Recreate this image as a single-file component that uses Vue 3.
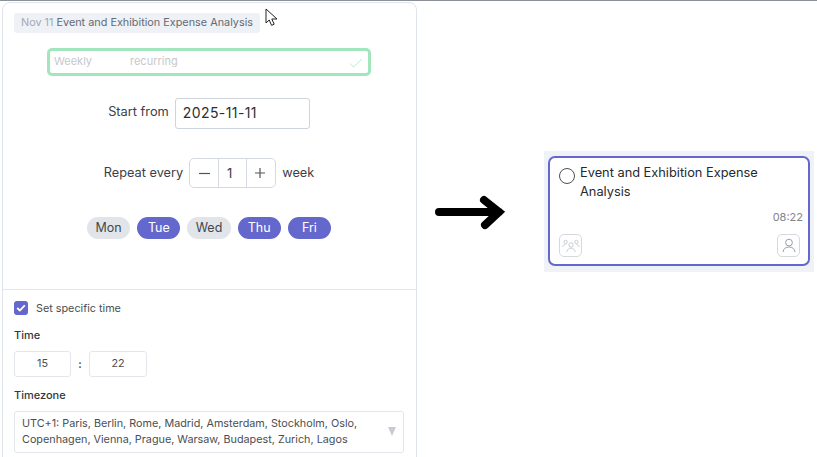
<script setup>
const days = [
  { name: 'Mon', on: false },
  { name: 'Tue', on: true },
  { name: 'Wed', on: false },
  { name: 'Thu', on: true },
  { name: 'Fri', on: true },
]
</script>

<template>
  <div class="page">
    <section class="panel">
      <div class="upper">
        <div class="tagline"><span class="tag"><span class="date">Nov 11</span> Event and Exhibition Expense Analysis</span></div>
        <div class="recur">
          <span class="weekly">Weekly</span>
          <span class="recurring">recurring</span>
          <svg class="ok" width="14" height="10" viewBox="0 0 14 10"><path d="M1 5.5 4.5 9 13 1" fill="none" stroke="#bdeccf" stroke-width="1"/></svg>
        </div>
        <div class="start">
          <span class="start-label">Start from</span>
          <div class="date-input">2025-11-11</div>
        </div>
        <div class="repeat">
          <span class="repeat-text">Repeat every</span>
          <div class="stepper">
            <span class="step">
              <svg width="11" height="11" viewBox="0 0 11 11"><path d="M0 5.5h11" stroke="#555" stroke-width="1.2"/></svg>
            </span>
            <span class="step mid">1</span>
            <span class="step plus">
              <svg width="10" height="10" viewBox="0 0 10 10"><path d="M0 5h10M5 0v10" stroke="#555" stroke-width="1.2"/></svg>
            </span>
          </div>
          <span class="repeat-text">week</span>
        </div>
        <div class="days">
          <span v-for="d in days" :key="d.name" class="day" :class="{ on: d.on }">{{ d.name }}</span>
        </div>
      </div>
      <div class="lower">
        <div class="check-row">
          <span class="check">
            <svg width="10" height="8" viewBox="0 0 10 8"><path d="M1.2 4 3.8 6.5 8.8 1.3" fill="none" stroke="#fff" stroke-width="1.8"/></svg>
          </span>
          <span>Set specific time</span>
        </div>
        <div class="label time-label">Time</div>
        <div class="time-row">
          <span class="time-box">15</span>
          <span class="colon">:</span>
          <span class="time-box wide">22</span>
        </div>
        <div class="label zone-label">Timezone</div>
        <div class="zone">
          <span>UTC+1: Paris, Berlin, Rome, Madrid, Amsterdam, Stockholm, Oslo, Copenhagen, Vienna, Prague, Warsaw, Budapest, Zurich, Lagos</span>
          <i class="caret"></i>
        </div>
      </div>
      <svg class="cursor" width="14" height="20" viewBox="0 0 14 20">
        <path d="M1 1v14l3.2-3 2.4 5.4 2.6-1.2-2.4-5.2H12z" fill="#fff" stroke="#222" stroke-width="1"/>
      </svg>
    </section>

    <svg class="arrow" width="74" height="38" viewBox="0 0 74 38">
      <path d="M6 18H66M51 6 66 18 52 31" fill="none" stroke="#000" stroke-width="8" stroke-linecap="round" stroke-linejoin="miter"/>
    </svg>

    <section class="board">
      <div class="card">
        <div class="title-row">
          <span class="radio"></span>
          <span class="title">Event and Exhibition Expense Analysis</span>
        </div>
        <div class="clock">08:22</div>
        <div class="actions">
          <span class="icon-btn faint">
            <svg width="18" height="14" viewBox="0 0 18 14" fill="none" stroke="#c3c7ce" stroke-width="0.9">
              <circle cx="9" cy="6" r="2.2"/><path d="M4.8 13c.3-2.6 2-3.8 4.2-3.8s3.9 1.2 4.2 3.8"/>
              <circle cx="3.6" cy="3" r="1.7"/><path d="M.6 8c.2-1.5 1.2-2.4 3-2.4"/>
              <circle cx="14.4" cy="3" r="1.7"/><path d="M17.4 8c-.2-1.5-1.2-2.4-3-2.4"/>
            </svg>
          </span>
          <span class="icon-btn">
            <svg width="14" height="15" viewBox="0 0 14 15" fill="none" stroke="#9aa0a8" stroke-width="1">
              <circle cx="7" cy="4.6" r="3.4"/><path d="M1 14c.4-3.4 2.8-5 6-5s5.6 1.6 6 5"/>
            </svg>
          </span>
        </div>
      </div>
    </section>
  </div>
</template>

<style scoped>
.page {
  width: 817px;
  height: 457px;
  overflow: hidden;
  display: flex;
  align-items: flex-start;
  font-family: Inter, "Noto Sans", sans-serif;
  background: #fff;
  border-top: 1px solid #8b8f96;
  box-sizing: border-box;
  color: #3c4046;
}
.panel {
  position: relative;
  flex: none;
  width: 415px;
  height: 480px;
  margin: 1px 0 0 2px;
  box-sizing: border-box;
  border: 1px solid #dfe4ec;
  border-radius: 8px;
  background: #fff;
}
.upper {
  height: 287px;
  box-sizing: border-box;
  padding: 10px 11px 0;
  border-bottom: 1px solid #e3e7ec;
}
.tagline { display: flex; }
.tag {
  height: 20px;
  line-height: 19px;
  padding: 0 7px;
  background: #eef1f5;
  border-radius: 3px;
  font-size: 10.85px;
  color: #666a72;
  white-space: nowrap;
}
.date { color: #a4a9b3; }
.recur {
  width: 324px;
  height: 28px;
  margin: 15px 0 0 33px;
  box-sizing: border-box;
  border: 3px solid #a2e6bd;
  border-radius: 5px;
  display: flex;
  align-items: center;
  padding: 0 5px 2px 4px;
  font-size: 11px;
  color: #c6c8cc;
}
.weekly { width: 76px; }
.ok { margin-left: auto; margin-top: 4px; }
.start {
  display: flex;
  align-items: center;
  justify-content: center;
  gap: 6px;
  margin: 22px 0 0 -1px;
  height: 31px;
  font-size: 12.8px;
}
.start-label { margin-top: -5px; }
.date-input {
  width: 135px;
  height: 31px;
  box-sizing: border-box;
  border: 1px solid #ced3e0;
  border-radius: 3px;
  padding: 0 7px;
  line-height: 28px;
  font-size: 14px;
  letter-spacing: 0.4px;
  color: #2c2f33;
}
.repeat {
  display: flex;
  align-items: center;
  justify-content: center;
  gap: 6px;
  margin: 29px 0 0 -1px;
  height: 30px;
  font-size: 12.75px;
}
.repeat-text { margin-top: -2px; }
.stepper {
  display: flex;
  width: 87px;
  height: 30px;
  box-sizing: border-box;
  border: 1px solid #d5dae2;
  border-radius: 5px;
}
.step {
  width: 28px;
  flex: none;
  display: flex;
  align-items: center;
  justify-content: center;
  font-size: 13px;
}
.step.mid {
  width: 29px;
  box-sizing: border-box;
  padding-right: 6px;
  border-left: 1px solid #d5dae2;
  border-right: 1px solid #d5dae2;
}
.step.plus { padding-right: 2px; box-sizing: border-box; }
.days {
  display: flex;
  justify-content: center;
  gap: 7px;
  margin: 29px 0 0 -1px;
}
.day {
  width: 43.2px;
  height: 22px;
  line-height: 21px;
  text-align: center;
  border-radius: 11px;
  background: #e1e5ea;
  font-size: 12.5px;
  color: #43474d;
}
.day.on { background: #6467cc; color: #fff; }
.lower { padding: 11px 11px 0; font-size: 10.8px; color: #4a4e54; }
.check-row { display: flex; align-items: center; gap: 8px; height: 14px; }
.check {
  width: 14px;
  height: 14px;
  border-radius: 3px;
  background: #6467cc;
  display: flex;
  align-items: center;
  justify-content: center;
}
.label { color: #33363b; font-size: 11px; font-weight: 500; line-height: 14px; }
.time-label { margin-top: 13px; }
.time-row { display: flex; align-items: center; margin-top: 9px; }
.time-box {
  width: 57px;
  height: 26px;
  box-sizing: border-box;
  border: 1px solid #e3e7ec;
  border-radius: 3px;
  text-align: center;
  line-height: 24px;
  color: #4a4e54;
}
.time-box.wide { width: 58px; }
.colon { width: 18px; text-align: center; font-weight: 600; }
.zone-label { margin-top: 11px; }
.zone {
  position: relative;
  width: 390px;
  height: 42px;
  margin-top: 9px;
  box-sizing: border-box;
  border: 1px solid #e3e7ec;
  border-radius: 3px;
  padding: 4px 30px 0 7px;
  line-height: 16px;
  font-size: 10.8px;
  color: #4a4e54;
}
.caret {
  position: absolute;
  right: 7px;
  top: 15px;
  border-left: 4.5px solid transparent;
  border-right: 4.5px solid transparent;
  border-top: 9px solid #c8ccd2;
}
.cursor { position: absolute; left: 262px; top: 5px; }
.arrow { flex: none; margin: 193px 0 0 16px; }
.board {
  flex: none;
  width: 270px;
  height: 121px;
  margin: 150px 0 0 37px;
  background: #eff2f6;
  padding: 5px 0 0 4px;
  box-sizing: border-box;
}
.card {
  width: 262px;
  height: 110px;
  box-sizing: border-box;
  border: 2px solid #6467cc;
  border-radius: 7px;
  background: #fff;
  padding: 5px 6px 0 9px;
  color: #26292e;
}
.title-row { display: flex; gap: 5px; }
.radio {
  flex: none;
  width: 14px;
  height: 14px;
  border: 1px solid #4b4f56;
  border-radius: 50%;
  margin-top: 5px;
}
.title { width: 208px; font-size: 12.8px; line-height: 19px; }
.clock { text-align: right; font-size: 11px; color: #80858d; margin: 9px -1px 0 0; line-height: 14px; }
.actions { display: flex; justify-content: space-between; margin: 10px 2px 0 0; }
.icon-btn {
  width: 23px;
  height: 23px;
  box-sizing: border-box;
  border: 1px solid #d5d8de;
  border-radius: 5px;
  display: flex;
  align-items: center;
  justify-content: center;
}
</style>
